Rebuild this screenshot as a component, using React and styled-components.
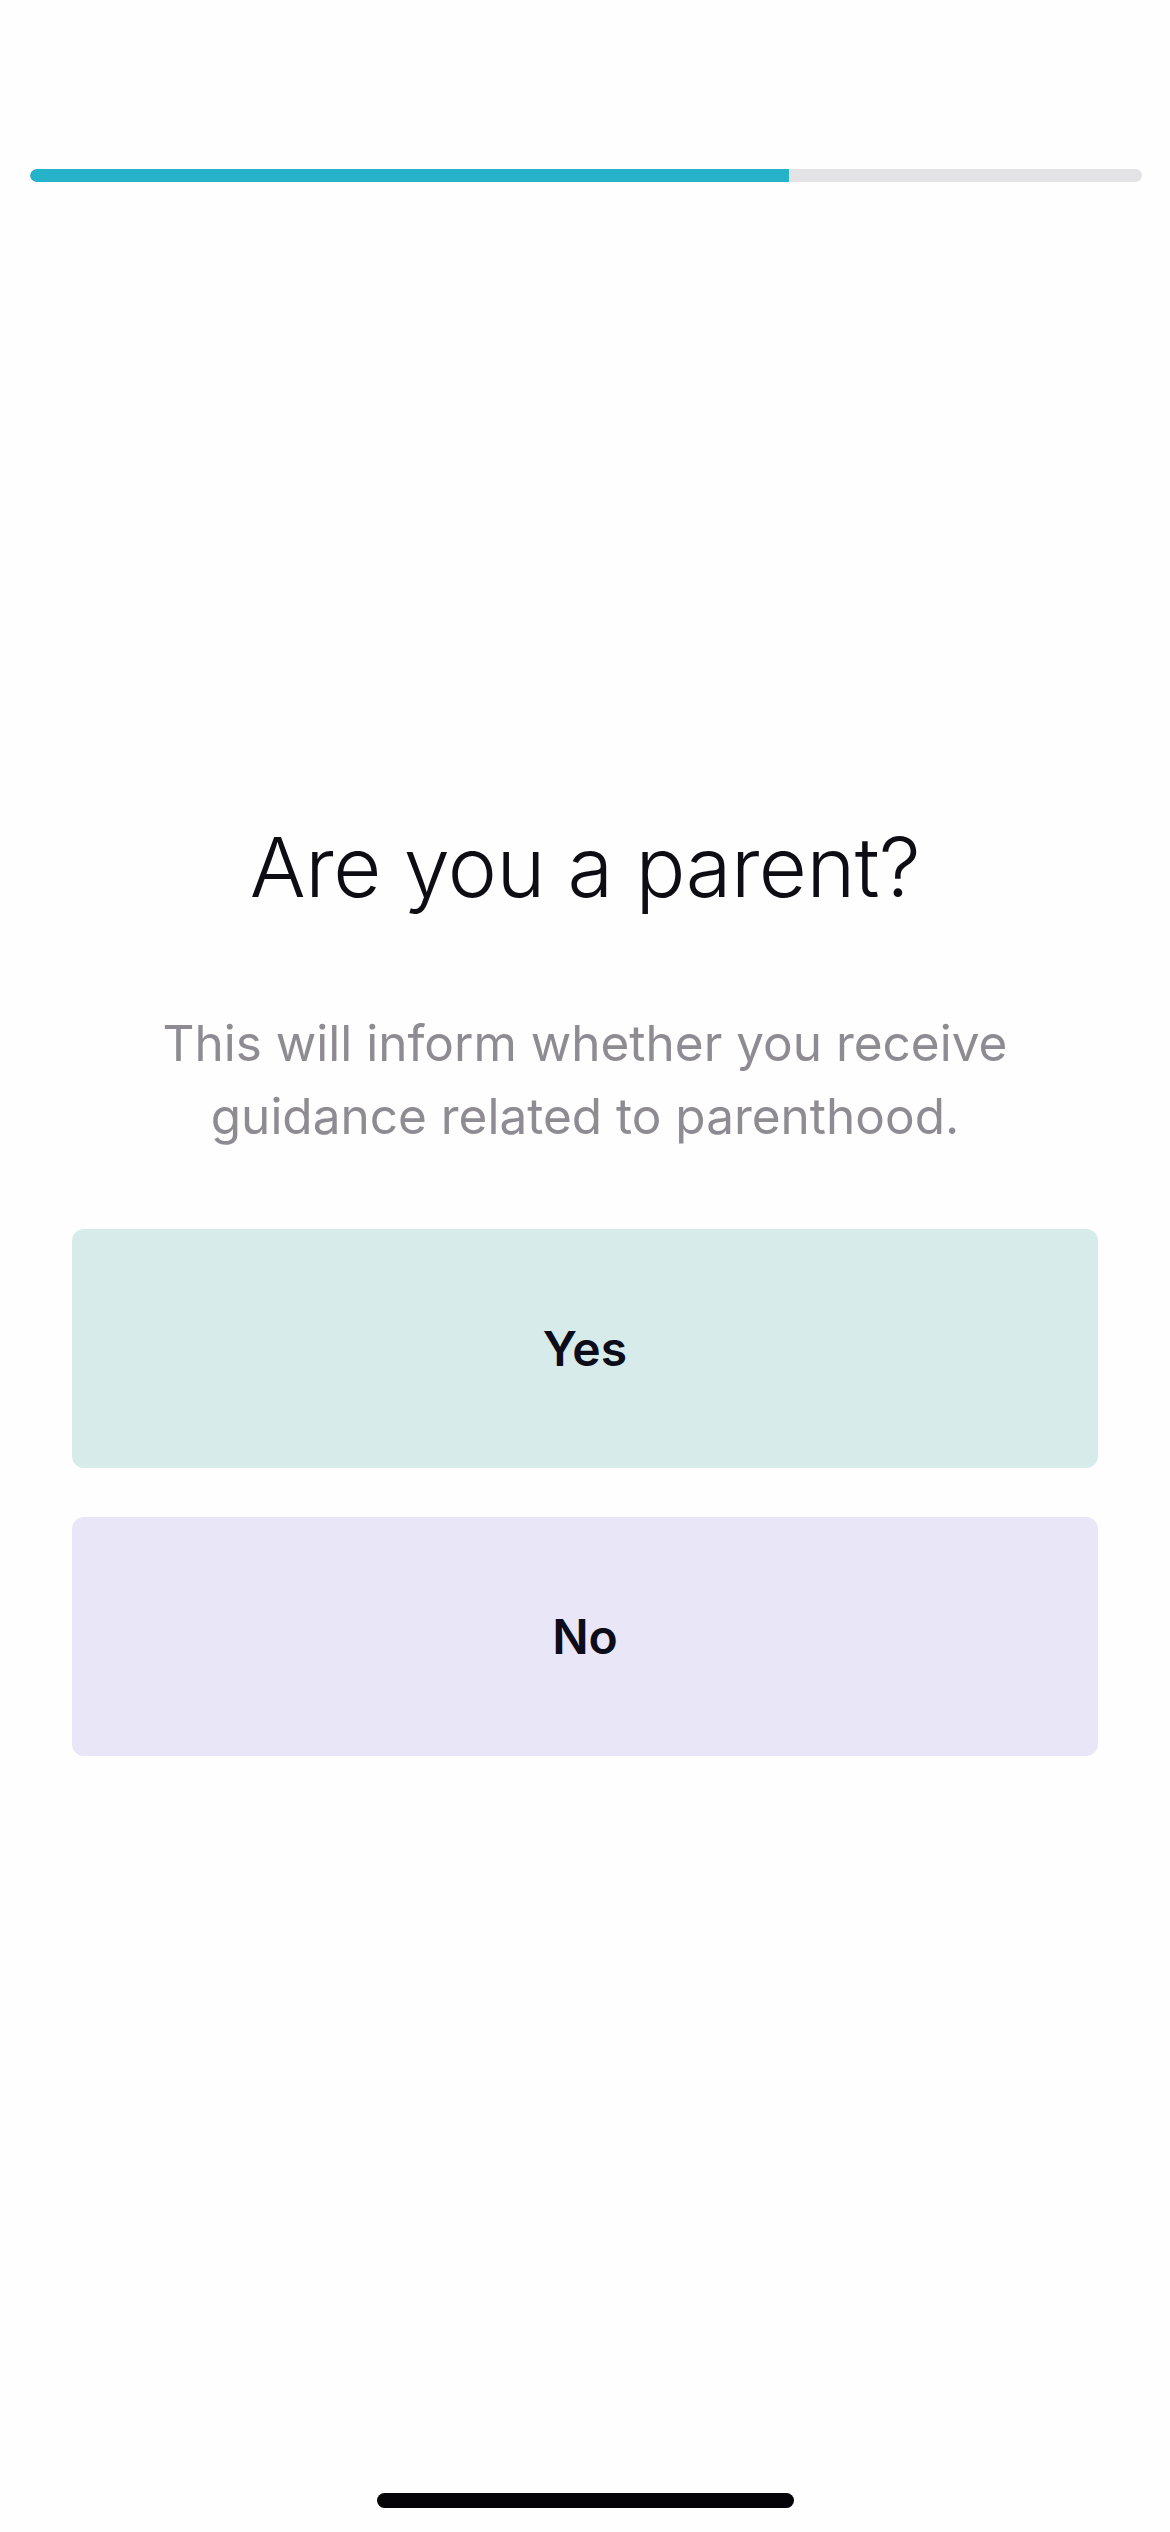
import styled, { createGlobalStyle } from "styled-components";

const GlobalStyle = createGlobalStyle`
  html, body {
    margin: 0;
    padding: 0;
    background: #fefefe;
  }
  * {
    box-sizing: border-box;
  }
`;

const Screen = styled.div`
  width: 1170px;
  height: 2532px;
  display: flex;
  flex-direction: column;
  font-family: "Inter", "Noto Sans", sans-serif;
`;

const ProgressTrack = styled.div`
  margin: 169px 28px 0 30px;
  height: 13px;
  border-radius: 7px;
  background: #e3e3e6;
  overflow: hidden;
`;

const ProgressFill = styled.div`
  height: 100%;
  background: #26b3c9;
  border-radius: 7px 0 0 7px;
`;

const Content = styled.div`
  flex: 1;
  display: flex;
  flex-direction: column;
  align-items: center;
  padding: 0 72px;
  padding-top: 644px;
`;

const Title = styled.h1`
  margin: 0;
  font-size: 83px;
  font-weight: 300;
  color: #0e0d14;
  line-height: 1;
  letter-spacing: -0.5px;
`;

const Subtitle = styled.p`
  margin: 98px 0 0;
  font-size: 49.5px;
  font-weight: 400;
  color: #8e8c92;
  line-height: 73px;
  text-align: center;
  max-width: 900px;
`;

const Options = styled.div`
  width: 100%;
  margin-top: 76px;
  display: flex;
  flex-direction: column;
  gap: 49px;
`;

const Option = styled.button`
  width: 100%;
  height: 239px;
  border: none;
  border-radius: 12px;
  background: ${(p) => p.$bg};
  font-family: "Inter", "Noto Sans", sans-serif;
  font-size: 48px;
  font-weight: 600;
  color: #0d0c1a;
  cursor: pointer;
`;

const HomeBar = styled.div`
  align-self: center;
  width: 417px;
  height: 15px;
  border-radius: 8px;
  background: #050408;
  margin-bottom: 24px;
`;

export default function App() {
  const progress = 68.3;
  return (
    <>
      <GlobalStyle />
      <Screen>
        <ProgressTrack>
          <ProgressFill style={{ width: `${progress}%` }} />
        </ProgressTrack>
        <Content>
          <Title>Are you a parent?</Title>
          <Subtitle>
            This will inform whether you receive guidance related to parenthood.
          </Subtitle>
          <Options>
            <Option $bg="#d7ecea">Yes</Option>
            <Option $bg="#e8e6f7">No</Option>
          </Options>
        </Content>
        <HomeBar />
      </Screen>
    </>
  );
}
